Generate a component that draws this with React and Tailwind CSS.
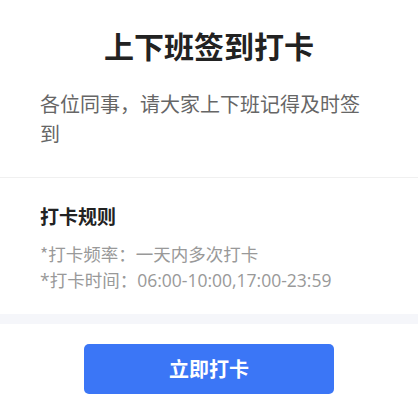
export default function App() {
  const font = { fontFamily: '"Noto Sans CJK SC", "Noto Sans", sans-serif' };
  return (
    <div className="w-[418px] h-[415px] bg-white flex flex-col" style={font}>
      <div className="px-10 pt-[24px] pb-[28px] border-b border-[#f0f0f0]">
        <h1 className="text-center text-[30px] leading-[42px] font-bold text-[#222]">上下班签到打卡</h1>
        <p className="mt-[23px] text-[20px] leading-[30px] text-[#666]">各位同事，请大家上下班记得及时签到</p>
      </div>
      <div className="px-10 pt-[24px] pb-[20px]">
        <h2 className="text-[19px] leading-[28px] font-bold text-[#222]">打卡规则</h2>
        <p className="mt-[10px] text-[17.5px] leading-[27px] text-[#999]">*打卡频率：一天内多次打卡</p>
        <p className="text-[17.5px] leading-[27px] text-[#999] font-['Open_Sans','Noto_Sans_CJK_SC',sans-serif]">*打卡时间：06:00-10:00,17:00-23:59</p>
      </div>
      <div className="h-[10px] bg-[#f5f6fa]" />
      <div className="flex justify-center pt-[20px]">
        <button className="w-[250px] h-[50px] rounded-[5px] bg-[#3b76f6] text-white text-[20px] font-bold">立即打卡</button>
      </div>
    </div>
  );
}
